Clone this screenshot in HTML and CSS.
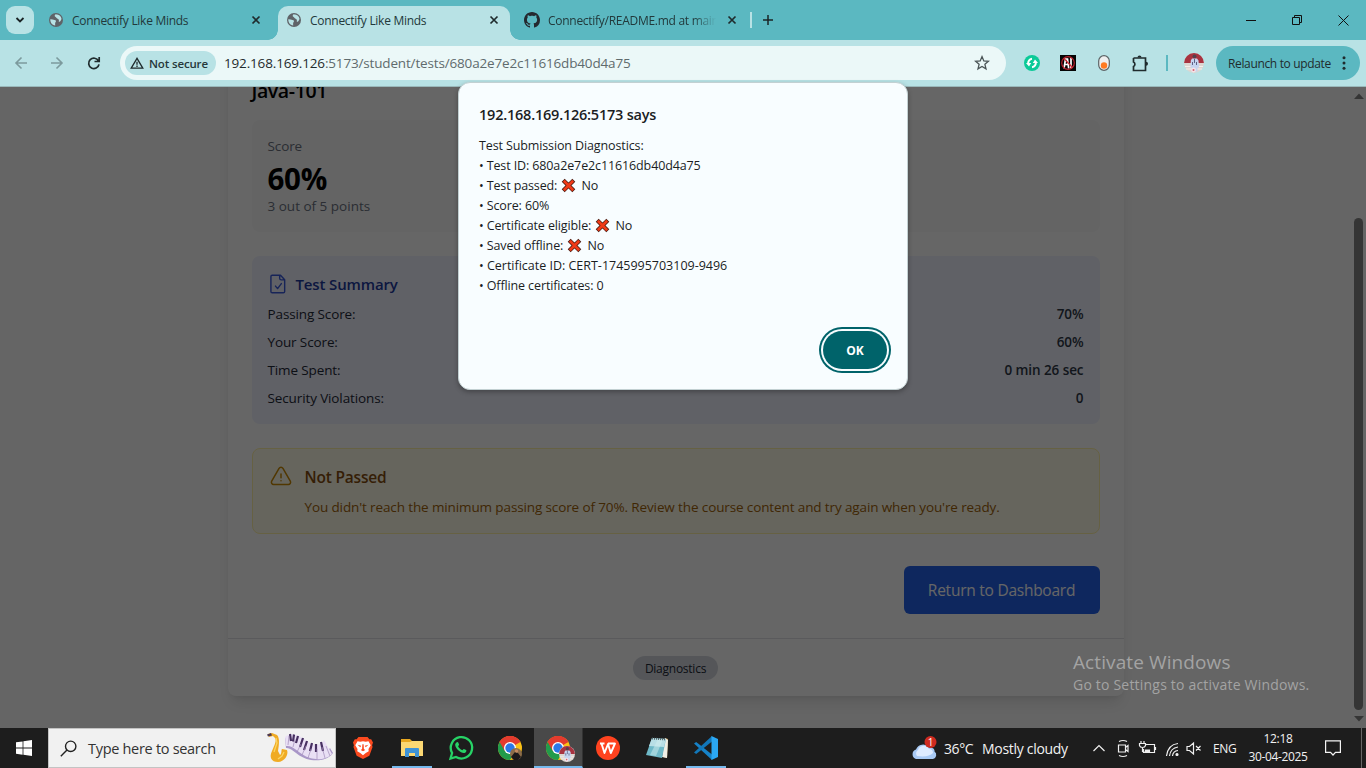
FILE: index.html
```html
<!DOCTYPE html>
<html lang="en">
<head>
<meta charset="utf-8">
<title>Connectify Like Minds</title>
<link rel="stylesheet" href="styles.css">
</head>
<body>
<svg class="defs" width="0" height="0" aria-hidden="true">
  <symbol id="globe" viewBox="0 0 14 14"><circle cx="7" cy="7" r="7" fill="#5f6368"/><path d="M1.3 6.2C2.5 6 4 6.6 5.5 7c1.500.3 1.900 1 1.200 1.900-.7.7-.6 1.700-.5 3.500C3 12 1.200 9.600 1.300 6.200zM6.600 1.300c-1 .8-1.300 1.900-.3 2.500 1 .5 1.100 1.600 2.300 2 1.400.5 1.600 2 1.100 3 .9.200 2-.4 2.800-2.800-.2-2.500-2-4.500-5.900-4.700z" fill="#b8e2e5"/></symbol>
  <symbol id="close" viewBox="0 0 10 10"><path d="M1.500 1.500l7 7M8.500 1.500l-7 7" stroke="#1f2b2d" stroke-width="1.700" fill="none"/></symbol>
  <symbol id="cross" viewBox="0 0 15 15"><path d="M2.200 2.200l10.600 10.600M12.800 2.200L2.200 12.800" stroke="#4a1c12" stroke-width="4.200"/><path d="M2.800 2.800l9.400 9.400M12.200 2.800l-9.400 9.400" stroke="#f03a17" stroke-width="2.700"/></symbol>
  <symbol id="chrome" viewBox="0 0 24 24"><circle cx="12" cy="12" r="12" fill="#fbc116"/><path d="M12 12L1.600 6A12 12 0 0 1 22.400 6z" fill="#e33b2e"/><path d="M1.600 6A12 12 0 0 0 12 24l5.200-9L12 12z" fill="#229b4b"/><path d="M12 6h10.400A12 12 0 0 0 1.600 6l5.200 9z" fill="#e33b2e"/><circle cx="12" cy="12" r="6" fill="#fff"/><circle cx="12" cy="12" r="4.700" fill="#2b78e8"/></symbol>
  <symbol id="avatar" viewBox="0 0 20 20"><circle cx="10" cy="10" r="10" fill="#ddd5d0"/><path d="M.1 10a9.900 9.900 0 0 1 19.800 0z" fill="#a83340"/><path d="M1 13.500h18M2 16h16" stroke="#f3efec" stroke-width="1"/><path d="M8 5.500h5l1.500 2 .5 7h-1.500v4h-6v-4H6.500l.3-7z" fill="#c5d4f0"/><circle cx="10.500" cy="3.300" r="1.900" fill="#53414d"/><path d="M10.500 6v4M8.500 9v3M12.500 9v3" stroke="#5f6485" fill="none"/><circle cx="9.500" cy="17" r="2.400" fill="#f4e3e8"/><circle cx="9.500" cy="17" r="1" fill="#d56171"/></symbol>
</svg>

<header class="tabstrip">
  <button class="tab-search"><svg width="10" height="8" viewBox="0 0 10 8"><path d="M1.500 2L5 5.500 8.500 2" fill="none" stroke="#1b2426" stroke-width="1.800"/></svg></button>
  <div class="tab tab-first"><svg class="favicon"><use href="#globe"/></svg><span class="tab-title">Connectify Like Minds</span><svg class="tab-close"><use href="#close"/></svg></div>
  <div class="tab tab-active"><svg class="favicon"><use href="#globe"/></svg><span class="tab-title">Connectify Like Minds</span><svg class="tab-close"><use href="#close"/></svg></div>
  <div class="tab tab-last"><svg class="github" viewBox="0 0 16 16"><path fill="#24292f" d="M8 0C3.580 0 0 3.580 0 8c0 3.540 2.290 6.530 5.470 7.590.4.070.55-.17.55-.38 0-.19-.01-.82-.01-1.490-2.010.37-2.530-.49-2.690-.94-.09-.23-.48-.94-.82-1.130-.28-.15-.68-.52-.01-.53.63-.01 1.080.58 1.230.82.72 1.210 1.870.87 2.330.66.07-.52.28-.87.51-1.070-1.780-.2-3.640-.89-3.640-3.950 0-.87.31-1.590.82-2.150-.08-.2-.36-1.020.08-2.120 0 0 .67-.21 2.200.82.64-.18 1.320-.27 2-.27s1.360.09 2 .27c1.530-1.040 2.200-.82 2.200-.82.44 1.100.16 1.920.08 2.120.51.56.82 1.270.82 2.150 0 3.070-1.870 3.750-3.650 3.950.29.25.54.73.54 1.480 0 1.070-.01 1.930-.01 2.200 0 .21.15.46.55.38A8.010 8.010 0 0 0 16 8c0-4.420-3.580-8-8-8z"/></svg><span class="tab-title tab-fade">Connectify/README.md at main</span><svg class="tab-close"><use href="#close"/></svg></div>
  <span class="tab-divider"></span>
  <svg class="new-tab" width="12" height="12" viewBox="0 0 12 12"><path d="M6 1v10M1 6h10" stroke="#1b2426" stroke-width="1.500"/></svg>
  <svg class="window-controls" width="106" height="12" viewBox="0 0 106 12" fill="none" stroke="#101010"><path d="M0 6.500h10M46.500 3.500h7v7h-7zM48.500 3.500v-2h7v7h-2M92.500 1.500l10 10M102.500 1.500l-10 10"/></svg>
</header>

<nav class="toolbar">
  <svg class="nav-icons" width="90" height="14" viewBox="0 0 90 14" fill="none" stroke-width="1.600"><path d="M13 7H2M7.500 1.500L2 7l5.500 5.500M37 7h11M42.500 1.500L48 7l-5.500 5.500" stroke="#7c9a9d"/><path d="M84.500 5A5.200 5.200 0 1 0 85 8.300M85.200 1v4.500h-4.700" stroke="#1f2b2d" stroke-width="1.700"/></svg>
  <div class="omnibox">
    <span class="security"><svg width="14" height="12" viewBox="0 0 14 12" fill="none" stroke="#1f2b2d" stroke-width="1.300"><path d="M7 1.300L1.200 11.200h11.600zM7 4.800v3M7 8.600v1.300"/></svg><span class="security-text">Not secure</span></span>
    <span class="url"><span class="url-host">192.168.169.126</span>:5173/student/tests/680a2e7e2c11616db40d4a75</span>
    <svg class="star" width="16" height="16" viewBox="0 0 16 16"><path d="M8 1.600l1.800 4.300 4.600.4-3.500 3 1.100 4.600L8 11.500l-4 2.400 1.100-4.600-3.500-3 4.600-.4z" fill="none" stroke="#4a5456" stroke-width="1.300"/></svg>
  </div>
  <div class="extensions">
    <svg width="16" height="16" viewBox="0 0 16 16"><circle cx="8" cy="8" r="8" fill="#0cca98"/><path d="M8 3.800A4.200 4.200 0 0 0 4.300 9M8 12.200A4.200 4.200 0 0 0 11.700 7" fill="none" stroke="#fff" stroke-width="2"/><path d="M2 8h5.200L5 11.500zM14 8H8.800L11 4.500z" fill="#fff"/></svg>
    <svg width="16" height="16" viewBox="0 0 16 16"><path fill="#050505" d="M0 0h16v16H0z"/><path d="M4 13.500l1.500-9.500h2l1.200 9.500M5 9.500h3M11 3v10.500" stroke="#fff" stroke-width="1.700" fill="none"/><circle cx="8" cy="8" r="6.300" fill="none" stroke="#b6202c" stroke-width="1.200"/><path d="M4 3.500l8.500 9" stroke="#d32834" stroke-width="1.200"/></svg>
    <svg width="12" height="16" viewBox="0 0 12 16"><rect x=".7" y=".7" width="10.600" height="14.600" rx="5.300" fill="#efefef" stroke="#5d6466" stroke-width="1.200"/><circle cx="6" cy="10.500" r="3.200" fill="#ff7a22"/></svg>
    <svg width="17" height="17" viewBox="0 0 17 17"><path d="M1.500 3h12v12.500h-12v-4a2.500 2.500 0 0 0 0-4.500V3" fill="none" stroke="#1f2b2d" stroke-width="1.700"/><path d="M5.500 2.500a2 2 0 0 1 4 0zM14 6.700a2 2 0 0 1 0 4z" fill="#1f2b2d"/></svg>
  </div>
  <span class="toolbar-divider"></span>
  <svg class="profile"><use href="#avatar"/></svg>
  <button class="relaunch"><span class="relaunch-text">Relaunch to update</span><svg width="4" height="14" viewBox="0 0 4 14" fill="#1f2b2d"><circle cx="2" cy="1.700" r="1.500"/><circle cx="2" cy="7" r="1.500"/><circle cx="2" cy="12.300" r="1.500"/></svg></button>
</nav>

<div class="viewport">
  <main class="page">
    <article class="card">
      <div class="card-body">
        <h2 class="course">Java-101</h2>
        <section class="score">
          <span class="score-label">Score</span>
          <strong class="score-value">60%</strong>
          <span class="score-points">3 out of 5 points</span>
        </section>
        <section class="summary">
          <h3 class="summary-title"><svg width="20" height="20" viewBox="0 0 24 24" fill="none" stroke="#3b5bdb" stroke-width="1.700" stroke-linejoin="round" stroke-linecap="round"><path d="M15 1.500H5a1.500 1.500 0 0 0-1.500 1.500v18A1.500 1.500 0 0 0 5 22.500h13.500A1.500 1.500 0 0 0 20 21V7l-5-5.500zM14 1.500V5a2 2 0 0 0 2 2h4M9 14.500l2.500 3 4.500-6"/></svg><span>Test Summary</span></h3>
          <div class="row"><span>Passing Score:</span><b class="row-value">70%</b></div>
          <div class="row"><span>Your Score:</span><b class="row-value">60%</b></div>
          <div class="row"><span>Time Spent:</span><b class="row-value">0 min 26 sec</b></div>
          <div class="row"><span>Security Violations:</span><b class="row-value">0</b></div>
        </section>
        <section class="notice">
          <svg width="24" height="24" viewBox="0 0 24 24" fill="none" stroke="#ca8a04" stroke-width="1.500" stroke-linecap="round" stroke-linejoin="round"><path d="M12 9v3.750m-9.303 3.376c-.866 1.500.217 3.374 1.948 3.374h14.710c1.730 0 2.813-1.874 1.948-3.374L13.949 3.378c-.866-1.500-3.032-1.500-3.898 0L2.697 16.126zM12 15.750h.007v.008H12v-.008z"/></svg>
          <div><h3 class="notice-title">Not Passed</h3><p class="notice-text">You didn't reach the minimum passing score of 70%. Review the course content and try again when you're ready.</p></div>
        </section>
        <div class="actions"><button class="return">Return to Dashboard</button></div>
      </div>
      <footer class="card-footer"><button class="diagnostics">Diagnostics</button></footer>
    </article>
  </main>
  <aside class="scrollbar">
    <svg width="10" height="6"><path d="M0 6l5-5.500L10 6z" fill="#858585"/></svg>
    <span class="thumb"></span>
    <svg width="10" height="6"><path d="M0 0h10L5 5.500z" fill="#858585"/></svg>
  </aside>
  <div class="scrim"></div>
</div>

<section class="dialog">
  <h1 class="dialog-title">192.168.169.126:5173 says</h1>
  <div class="dialog-text">
    <p>Test Submission Diagnostics:</p>
    <p>• Test ID: 680a2e7e2c11616db40d4a75</p>
    <p>• Test passed: <svg class="cross"><use href="#cross"/></svg> No</p>
    <p>• Score: 60%</p>
    <p>• Certificate eligible: <svg class="cross"><use href="#cross"/></svg> No</p>
    <p>• Saved offline: <svg class="cross"><use href="#cross"/></svg> No</p>
    <p class="certificate-id">• Certificate ID: CERT-1745995703109-9496</p>
    <p>• Offline certificates: 0</p>
  </div>
  <button class="ok">OK</button>
</section>

<div class="watermark"><p class="watermark-title">Activate Windows</p><p class="watermark-text">Go to Settings to activate Windows.</p></div>

<footer class="taskbar">
  <div class="start"><svg width="16" height="16" viewBox="0 0 16 16" fill="#fff"><path d="M0 2.300l6.600-.9v6.200H0zM7.400 1.300L16 0v7.600H7.400zM0 8.400h6.600v6.300L0 13.800zM7.400 8.400H16V16l-8.600-1.200z"/></svg></div>
  <div class="search">
    <svg class="magnifier" width="17" height="17" viewBox="0 0 17 17" fill="none" stroke="#222" stroke-width="1.400"><circle cx="10.700" cy="6.300" r="5.200"/><path d="M7 10L.8 16.200"/></svg>
    <span class="search-text">Type here to search</span>
    <svg class="music" width="66" height="32" viewBox="0 0 66 32">
      <path d="M18 6c10-3 15 14 28 15 8 1 14-1 17-5l3 5c-5 7-14 8-22 7C31 26 25 15 19 16z" fill="#a997c8"/>
      <path d="M18 5c6-6 16-1 23 5 7 5 14 3 16-2l8 14c-6 6-15 6-22 4C31 22 27 13 19 14z" fill="#e9dff5"/>
      <path d="M23 2l1 7M27 2.500l-1 7M31 4l-2 7M36 6l-3 9M40 9l-3 9M45 11l-2 8M49 12v8M54 10l2 9" stroke="#473061" stroke-width="2.200"/>
      <path d="M22 4l-1 9M28 7l-2 8M34 12l-4 8M39 14l-4 9M44 17l-3 9M50 17v10M55 15l3 11M59 14l4 10" stroke="#a18bb8" stroke-width=".7"/>
      <path d="M1 2l4-1 5 2c3 3 2 10 1 16l2 4c2-1 1-5 2-6l5 1c2 5-3 12-9 12-7 0-9-5-6-11 2-5 5-10 3-13L6 4 2 5z" fill="#f0ab24"/>
      <path d="M9 6l1 5-3 9M11 27l4-3 2-4" fill="none" stroke="#fbd562" stroke-width="1.300"/><path d="M0 2.500L4 1l1 2.500-4 1z" fill="#4f3b50"/>
    </svg>
  </div>
  <div class="apps">
    <div class="app"><svg width="20" height="24" viewBox="0 0 22 24"><path d="M6 0h10l2 2.500 2-.2 2 3.700-1 3 .5 2-3.500 9.500L11 24l-7-3.500L.5 11 1 9 0 6l2-3.700 2 .2z" fill="#fb4a1f"/><path d="M5 4.500l3 .7 3-.7 3 .7 3-.7L19.500 9 17 13l.3 2.500L14 17.500 11 20l-3-2.500-3.300-2L5 13 2.500 9z" fill="#fff"/><path d="M5 8.500l4 1-1 1.800zM17 8.500l-4 1 1 1.800zM10.300 8h1.400l.3 5 1.500 1.200L11 15.500l-2.500-1.300L10 13z" fill="#fb4a1f"/></svg></div>
    <div class="app app-open"><svg width="22" height="20" viewBox="0 0 22 20"><path d="M0 1h9l2 2h11v15H0z" fill="#e9a820"/><path d="M0 4h9l2-1h11v15H0z" fill="#fcd873"/><path d="M4 19v-8q0-1 1-1h12q1 0 1 1v8h-4v-4H8v4z" fill="#3f93d6"/></svg></div>
    <div class="app"><svg width="24" height="24" viewBox="0 0 24 24"><path d="M1.500 22.500L3.100 17A10.700 10.700 0 1 1 7 21z" fill="none" stroke="#27d366" stroke-width="2.300"/><path d="M7.500 6.500c.5-.6 1.400-.6 1.700.1l.9 2c.1.500-.8 1.300-1 1.700.7 1.700 2.300 3.200 4.200 4 .5-.3 1-1.400 1.600-1.400l2.200 1.100c.8.500-.1 2.300-1 2.800-3 1.600-9.900-3.900-9.900-8 0-1 .6-1.800 1.300-2.300z" fill="#27d366"/></svg></div>
    <div class="app"><svg class="chrome"><use href="#chrome"/></svg><svg class="app-badge" viewBox="0 0 12 12"><circle cx="6" cy="6" r="6" fill="#8b6c48"/><path d="M1 9l4-5 3 1 3 4-3 3H4z" fill="#1c191a"/><circle cx="6.500" cy="3" r="1.700" fill="#c58b60"/></svg></div>
    <div class="app app-active"><svg class="chrome"><use href="#chrome"/></svg><svg class="app-badge app-badge-large"><use href="#avatar"/></svg></div>
    <div class="app"><svg width="24" height="24" viewBox="0 0 24 24"><circle cx="12" cy="12" r="12" fill="#ff431f"/><path d="M4 7.500h4.500M5.500 7.500l3 9.500 3.500-9 2.800 9L19 7.500H12" fill="none" stroke="#fff" stroke-width="1.900" stroke-linejoin="round"/></svg></div>
    <div class="app"><svg width="24" height="22" viewBox="0 0 24 22"><path d="M20 1l3 1-1 19-4-1z" fill="#bd9653"/><path d="M17 20l5 1 1-18-3-2z" fill="#f0efe6"/><path d="M7 1l14 1-4 19-16-3z" fill="#6eb9c8"/><path d="M7 1l14 1-2 8-15-1z" fill="#b9dfe6"/><path d="M13 2l5 .3L11 19l-6-1z" fill="#d4eff0" opacity=".5"/><path d="M7 1.500l14 1" stroke="#536468" stroke-width="2" stroke-dasharray="1"/></svg></div>
    <div class="app app-open"><svg width="24" height="24" viewBox="0 0 24 24"><path d="M0 7.500L2.200 6 18 18.500V24z" fill="#1682c8"/><path d="M0 16.500L2.200 18 18 5.500V0z" fill="#1277b9"/><path d="M17.500 0L24 3v18l-6.500 3z" fill="#2ba8f4"/></svg></div>
  </div>
  <div class="weather"><svg width="26" height="24" viewBox="0 0 26 24"><path d="M4 23a5 5 0 0 1 0-9.500 7.500 7.500 0 0 1 13-2c4-.5 6 2 5.500 4A4.200 4.200 0 0 1 21 23z" fill="#a9caf5"/><path d="M5 20a4 4 0 0 1 1-6 6 6 0 0 1 11-1c3 0 4 2 4 4-3 3-8 4-16 3z" fill="#deebff"/><circle cx="18.500" cy="6" r="6" fill="#cf2b20"/><text x="18.500" y="9.500" class="weather-badge">1</text></svg><span class="temperature">36°C</span><span class="condition">Mostly cloudy</span></div>
  <svg class="tray" width="108" height="18" viewBox="0 0 108 18" fill="none" stroke="#f0f0f0" stroke-width="1.200"><path d="M.5 12l5.500-5.500L11.500 12M25.500 6h7v7h-7zM32.500 8.500l2.500-2v6l-2.500-2M26 2.500q4-2 8 0M26 16.500q4 2 8 0"/><path d="M53 5.500h8.500v8h-11V10M62.500 8v3M48 2v3M51 2v3M46.500 4.500h6v2q-.5 2-3 2t-3-2zM49.500 8.500v4h2"/><path d="M52.500 11h4v2h-4z" fill="#f0f0f0"/><g><path d="M73.500 17Q75 5.500 85 4.500M76.500 17Q77.500 9 85 8M79.500 17q.5-5 5.500-5.500"/><circle cx="84" cy="15.500" r="1" fill="#fff"/></g><path d="M94 7.500h2.500l4-3.500v11l-4-3.500H94zM103 7l4.500 4.500M107.500 7L103 11.500"/></svg>
  <span class="language">ENG</span>
  <div class="clock"><span class="time">12:18</span><span class="date">30-04-2025</span></div>
  <svg class="notifications" width="16" height="16" viewBox="0 0 16 16" fill="none" stroke="#f4f4f4" stroke-width="1.200"><path d="M.6.800h14.800v11.500H10.500L8 15l-2.500-2.700H.6z"/></svg>
  <span class="show-desktop"></span>
</footer>
</body>
</html>
```
FILE: styles.css
```css
* { box-sizing: border-box; }
body { margin: 0; width: 1366px; height: 768px; overflow: hidden; display: flex; flex-direction: column; position: relative; font-family: "Open Sans", "Noto Sans", sans-serif; background: #b8e2e5; color: #1b1b1b; }
h1, h2, h3, p { margin: 0; }
button { border: 0; padding: 0; font-family: inherit; }
svg { display: block; flex: none; overflow: visible; }
span, p, h1, h2, h3, b, button { white-space: nowrap; }
.defs { position: absolute; }

/* Tab strip */
.tabstrip { height: 40px; background: #5bb8c1; display: flex; align-items: center; flex: none; }
.tab-search { width: 28px; height: 28px; margin-left: 6px; border-radius: 9px; background: #b8e2e5; display: flex; align-items: center; justify-content: center; }
.tab { height: 34px; align-self: flex-end; display: flex; align-items: center; flex: none; }
.tab-first { width: 244px; padding-left: 15px; }
.tab-active { width: 232px; padding-left: 9px; background: #b8e2e5; border-radius: 10px 10px 0 0; position: relative; }
.tab-active::before, .tab-active::after { content: ""; position: absolute; bottom: 0; width: 10px; height: 10px; }
.tab-active::before { left: -10px; background: radial-gradient(circle at 0 0, transparent 9.500px, #b8e2e5 10px); }
.tab-active::after { right: -10px; background: radial-gradient(circle at 100% 0, transparent 9.500px, #b8e2e5 10px); }
.tab-last { width: 240px; padding-left: 14px; }
.favicon { width: 14px; height: 14px; margin-bottom: 7px; }
.github { width: 16px; height: 16px; margin-bottom: 7px; }
.tab-title { width: 176px; margin: 0 0 5px 9px; font-size: 12px; letter-spacing: -.28px; line-height: 18px; color: #22393b; overflow: hidden; }
.tab-last .tab-title { margin-left: 8px; width: 168px; }
.tab-fade { -webkit-mask-image: linear-gradient(90deg, #000 145px, transparent 168px); mask-image: linear-gradient(90deg, #000 145px, transparent 168px); }
.tab-close { width: 10px; height: 10px; margin: 0 0 6px 3px; }
.tab-last .tab-close { margin-left: 11px; }
.tab-divider { width: 2px; height: 16px; background: #b8e2e5; }
.new-tab { margin-left: 10px; }
.window-controls { margin-left: 472px; }

/* Toolbar */
.toolbar { height: 47px; flex: none; display: flex; align-items: center; background: #b8e2e5; border-bottom: 1px solid #9ab9bb; }
.nav-icons { margin-left: 14px; }
.omnibox { width: 886px; height: 34px; margin-left: 16px; padding-left: 5px; border-radius: 17px; background: #ebf8f8; display: flex; align-items: center; }
.security { width: 91px; height: 24px; border-radius: 12px; background: #b8e2e5; display: flex; align-items: center; padding-left: 5px; gap: 5px; }
.security-text { font-size: 11.500px; font-weight: 600; letter-spacing: -.15px; color: #26383a; }
.url { width: 730px; margin-left: 8px; font-size: 13.500px; letter-spacing: -.16px; color: #5f6b6d; }
.url-host { color: #1f2b2d; }
.star { margin-left: 20px; }
.extensions { display: flex; align-items: center; margin-left: 18px; }
.extensions svg:nth-child(2) { margin-left: 20px; }
.extensions svg:nth-child(3) { margin-left: 22px; }
.extensions svg:nth-child(4) { margin-left: 22px; }
.toolbar-divider { width: 2px; height: 16px; margin-left: 17px; background: #5bb8c1; }
.profile { width: 20px; height: 20px; margin-left: 16px; }
.relaunch { width: 144px; height: 34px; margin-left: 12px; padding: 0 14px 0 12px; border-radius: 17px; background: #5bb8c1; display: flex; align-items: center; justify-content: space-between; color: #1f2b2d; }
.relaunch-text { font-size: 12px; letter-spacing: -.35px; }

/* Page */
.viewport { height: 641px; flex: none; display: flex; position: relative; overflow: hidden; background: #fff; }
.page { width: 1351px; background: #fdfdfd; display: flex; justify-content: center; align-items: flex-start; }
.card { width: 896px; margin-top: -35px; background: #fff; border-radius: 8px; box-shadow: 0 10px 15px -3px rgba(0,0,0,.1), 0 4px 6px -4px rgba(0,0,0,.1); font-size: 13.500px; line-height: 20px; }
.card-body { padding: 24px; }
.course { font-size: 19.500px; font-weight: 600; line-height: 28px; padding-top: 1px; margin-bottom: 15px; color: #000; letter-spacing: -.4px; }
.score { height: 112px; padding: 16px; border-radius: 8px; background: #f9fafb; display: flex; flex-direction: column; color: #6b7280; }
.score-label { letter-spacing: -.1px; }
.score-value { margin-top: 4px; padding-top: 1px; height: 36px; font-size: 29.500px; line-height: 36px; color: #000; letter-spacing: -.3px; }
.score-points { letter-spacing: 0; }
.summary { margin-top: 24px; padding: 16px; border-radius: 8px; background: #eff2ff; display: flex; flex-direction: column; gap: 8px; color: #1f2937; }
.summary-title { height: 24px; display: flex; align-items: center; gap: 8px; font-size: 15px; font-weight: 600; color: #1e3a9f; letter-spacing: -.14px; }
.row { display: flex; justify-content: space-between; letter-spacing: -.12px; }
.row-value { font-weight: 600; color: #2f3947; letter-spacing: -.08px; }
.notice { margin-top: 24px; padding: 16px; border: 1px solid #fef3a8; border-radius: 8px; background: #fefce8; display: flex; gap: 12px; color: #a1620a; }
.notice-title { font-size: 15.500px; line-height: 24px; font-weight: 600; color: #854d0e; letter-spacing: -.2px; }
.notice-text { margin-top: 8px; letter-spacing: -.12px; }
.actions { display: flex; justify-content: flex-end; margin-top: 32px; }
.return { width: 196px; height: 48px; border-radius: 6px; background: #2563eb; color: #fff; font-size: 15.500px; letter-spacing: -.25px; }
.card-footer { height: 58px; border-top: 1px solid #e0e2e6; display: flex; align-items: center; justify-content: center; }
.diagnostics { width: 85px; height: 24px; padding-top: 1px; border-radius: 12px; background: #d4d8df; color: #1f2937; font-size: 12px; letter-spacing: -.25px; }
.scrollbar { width: 15px; padding: 6px 0 6px; display: flex; flex-direction: column; align-items: center; background: #fcfcfc; }
.thumb { width: 9px; height: 492px; margin: auto 0 6px; border-radius: 5px; background: #858585; }
.scrim { position: absolute; inset: 0; background: rgba(0,0,0,.6); }

/* Alert dialog */
.dialog { position: absolute; left: 458px; top: 82px; width: 450px; height: 308px; padding: 21px 17px 17px 20px; border: 1px solid #c2d0d2; border-radius: 12px; background: #f8fdff; box-shadow: 0 2px 5px rgba(0,0,0,.3); display: flex; flex-direction: column; color: #1b1e1f; }
.dialog-title { font-size: 14.500px; line-height: 22px; font-weight: 600; letter-spacing: -.22px; }
.dialog-text { margin: 10px 0 0; font-size: 12.500px; line-height: 20px; letter-spacing: -.12px; }
.certificate-id { letter-spacing: -.01px; }
.cross { display: inline-block; width: 15px; height: 15px; margin: 0 2px 0 1px; vertical-align: -3px; }
.ok { align-self: flex-end; margin: auto 3px 3px 0; width: 64px; height: 38px; border-radius: 19px; background: #00636a; box-shadow: 0 0 0 2px #f8fdff, 0 0 0 4px #00636a; color: #fff; font-size: 12px; font-weight: 700; }

/* Activation watermark */
.watermark { position: absolute; left: 1073px; top: 649px; color: #a3a3a3; }
.watermark-title { font-size: 19px; line-height: 26px; letter-spacing: .1px; }
.watermark-text { font-size: 14px; line-height: 20px; letter-spacing: .2px; }

/* Taskbar */
.taskbar { height: 40px; flex: none; display: flex; align-items: center; background: #1d1d1d; color: #f2f2f2; }
.start { width: 48px; display: flex; justify-content: center; }
.search { width: 288px; height: 40px; padding-left: 11px; border: 1px solid #c3c3c3; background: #f1f1f1; display: flex; align-items: center; color: #333; }
.search-text { width: 178px; margin-left: 11px; font-size: 14.500px; letter-spacing: -.3px; }
.music { margin-left: 1px; }
.apps { display: flex; height: 40px; margin-left: 2px; }
.app { width: 49px; height: 40px; display: flex; align-items: center; justify-content: center; position: relative; }
.app-open::after { content: ""; position: absolute; left: 5px; bottom: 0; width: 40px; height: 2px; background: #76b9ed; }
.app-active { background: #494949; border-bottom: 2px solid #76b9ed; padding-top: 2px; border-right: 1px solid #333; }
.chrome { width: 24px; height: 24px; }
.app-badge { position: absolute; left: 25px; top: 20px; width: 12px; height: 12px; }
.app-badge-large { width: 16px; height: 16px; top: 18px; }
.weather { width: 160px; margin-left: 182px; display: flex; align-items: center; font-size: 14px; }
.weather-badge { font-size: 10px; fill: #fff; text-anchor: middle; }
.temperature { width: 38px; margin-left: 6px; letter-spacing: -.4px; }
.condition { letter-spacing: -.3px; }
.tray { margin-left: 21px; }
.language { width: 26px; margin-left: 12px; font-size: 12px; letter-spacing: -.3px; }
.clock { width: 64px; margin-left: 7px; display: flex; flex-direction: column; align-items: center; font-size: 12px; line-height: 18px; letter-spacing: -.35px; }
.notifications { margin-left: 15px; }
.show-desktop { width: 1px; height: 40px; margin-left: 20px; background: #666; }
```
